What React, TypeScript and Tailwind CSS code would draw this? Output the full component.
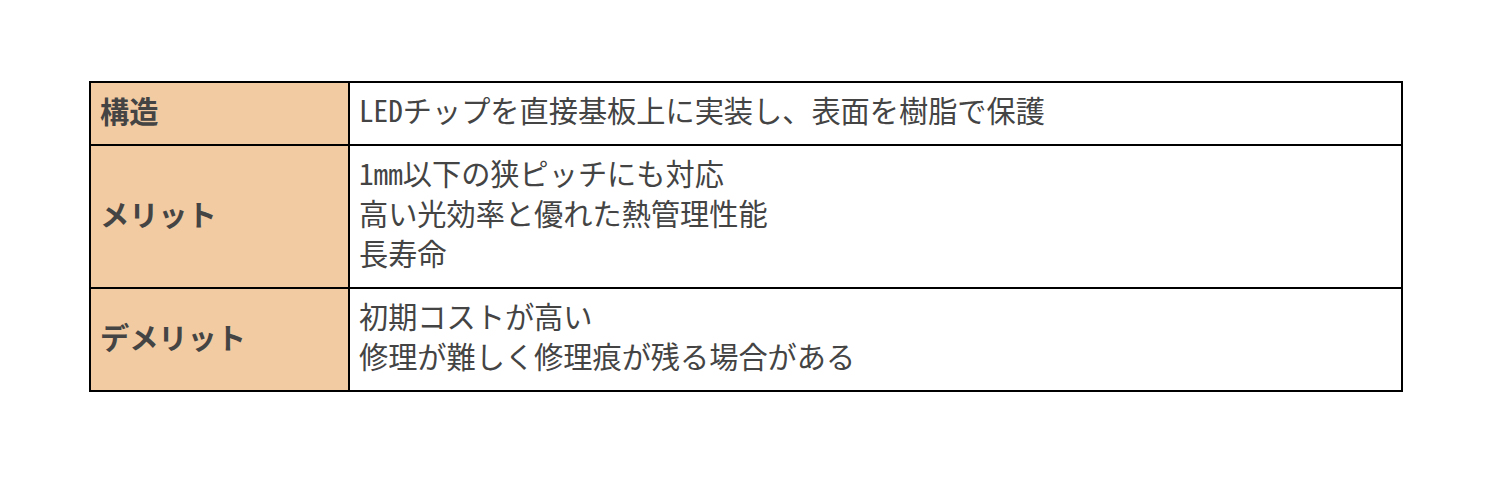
export default function App() {
  const rows = [
    { head: "構造", lines: ["LEDチップを直接基板上に実装し、表面を樹脂で保護"] },
    { head: "メリット", lines: ["1mm以下の狭ピッチにも対応", "高い光効率と優れた熱管理性能", "長寿命"] },
    { head: "デメリット", lines: ["初期コストが高い", "修理が難しく修理痕が残る場合がある"] },
  ]

  return (
    <div
      className="min-h-[480px] bg-white pt-[81px]"
      style={{ fontFamily: '"Noto Sans Mono CJK JP", "Noto Sans CJK JP", sans-serif' }}
    >
      <table className="mx-auto w-[1314px] border-collapse border-2 border-black text-[29.2px] leading-[40px] text-[#444]">
        <tbody>
          {rows.map((r) => (
            <tr key={r.head}>
              <th className="w-[259px] border-2 border-black bg-[#f2cba2] pl-[9px] pr-[9px] pt-[5px] pb-[13px] text-left align-middle font-bold">
                {r.head}
              </th>
              <td className="border-2 border-black pl-[9px] pr-[9px] pt-[6px] pb-[15px] align-middle">
                {r.lines.map((l) => (
                  <div key={l}>{l}</div>
                ))}
              </td>
            </tr>
          ))}
        </tbody>
      </table>
    </div>
  )
}
